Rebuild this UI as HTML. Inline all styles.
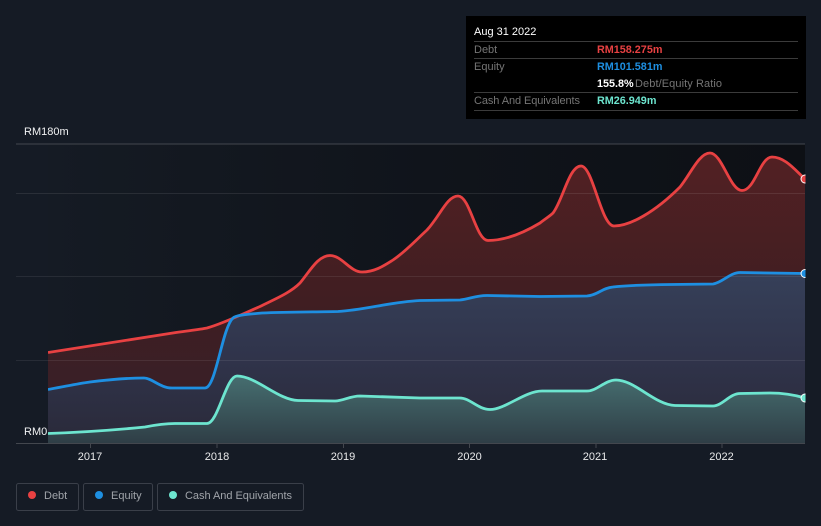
<!DOCTYPE html>
<html>
<head>
<meta charset="utf-8">
<style>
html,body{margin:0;padding:0;background:#151b25;}
svg{display:block;}
text{font-family:"Liberation Sans",sans-serif;font-size:11px;}
</style>
</head>
<body>
<svg width="821" height="526" viewBox="0 0 821 526" xmlns="http://www.w3.org/2000/svg">
<defs>
<linearGradient id="bg" x1="48" x2="805" y1="0" y2="0" gradientUnits="userSpaceOnUse">
<stop offset="0" stop-color="#151b24"/><stop offset="0.2" stop-color="#131820"/><stop offset="0.5" stop-color="#10141b"/><stop offset="1" stop-color="#0d1015"/>
</linearGradient>
<linearGradient id="d" x1="0" x2="0" y1="150" y2="440" gradientUnits="userSpaceOnUse">
<stop offset="0" stop-color="#532023"/><stop offset="0.55" stop-color="#3f1e22"/><stop offset="1" stop-color="#35202a"/>
</linearGradient>
<linearGradient id="e" x1="0" x2="0" y1="272" y2="440" gradientUnits="userSpaceOnUse">
<stop offset="0" stop-color="#364059"/><stop offset="0.5" stop-color="#30344b"/><stop offset="1" stop-color="#2a2a3a"/>
</linearGradient>
<linearGradient id="c" x1="0" x2="0" y1="376" y2="443" gradientUnits="userSpaceOnUse">
<stop offset="0" stop-color="#466e70"/><stop offset="1" stop-color="#2f3e46"/>
</linearGradient>
<clipPath id="clip"><rect x="48" y="140" width="757" height="303.5"/></clipPath>
</defs>
<rect width="821" height="526" fill="#151b25"/>
<rect x="48" y="144" width="757" height="299" fill="url(#bg)"/>

<g clip-path="url(#clip)">
<path fill="url(#d)" d="M48,352.5 L176,332.5 C190,330.5 200,329.5 207,328 C222,324 245,313 260,306.5 C275,299 290,293 300,283 C310,271 318,255.5 330,255.5 C342,255.5 350,272 362,272 C375,272 385,265 393,260 C405,252 415,241 427,230 C440,216 447,196 458,196 C470,196 476,240.5 488,240.5 C503,240.5 520,235 540,223 C545,219 550,216 553,213 C563,200 569,166 581,166 C593,166 601,226 614,226 C630,226 655,212 680,187 C690,175 699,153 710,153 C722,153 730,190.5 742,190.5 C755,190.5 760,157 772,157 C785,157 795,170 805,179 L805,443 L48,443 Z"/>
<path fill="url(#e)" d="M48,389.5 C62,387 76,384 90,382 C110,379.5 125,378 144,378 C152,378 160,388 172,388 L205,388 C216,388 222,328 233,318 C235,315.5 245,314.5 262,313 C285,312 310,312 338,311.5 C365,310 390,302 420,300.5 L460,300 C470,299 475,295.5 487,295.5 L540,296.5 L587,296 C598,295 602,288 613,287 C630,285 650,284.7 672,284.5 L713,284 C722,283 730,272.5 740,272.5 L805,273.5 L805,443 L48,443 Z"/>
<path fill="url(#c)" d="M48,433.5 C75,432.5 115,430 145,427 C155,425 165,423.5 175,423.5 L207,423.5 C218,423.5 226,376 237,376 C256,376 278,400 298,400.5 L335,401 C343,401 350,396 360,396 L420,398 L460,398 C470,398 478,409.5 490,409.5 C505,409.5 525,391 542,391 L587,391 C597,391 605,380 616,380 C635,380 655,405 675,405.5 L713,406 C722,406 730,393.5 740,393.5 L770,393 C785,393 795,395 805,398 L805,443 L48,443 Z"/>
</g>

<g stroke="#ffffff" stroke-width="1">
<path d="M16,193.5H805" stroke-opacity="0.09"/>
<path d="M16,276.5H805" stroke-opacity="0.08"/>
<path d="M16,360.5H805" stroke-opacity="0.08"/>
</g>
<path d="M16,144H805" stroke="#43474e" stroke-width="1"/>
<path d="M16,443.5H805" stroke="#43474e" stroke-width="1"/>
<path d="M90.5,444V448M217,444V448M343.5,444V448M469.5,444V448M596,444V448M722,444V448" stroke="#43474e" stroke-width="1"/>

<g clip-path="url(#clip)" fill="none" stroke-width="2.8" stroke-linejoin="round">
<path stroke="#e84142" d="M48,352.5 L176,332.5 C190,330.5 200,329.5 207,328 C222,324 245,313 260,306.5 C275,299 290,293 300,283 C310,271 318,255.5 330,255.5 C342,255.5 350,272 362,272 C375,272 385,265 393,260 C405,252 415,241 427,230 C440,216 447,196 458,196 C470,196 476,240.5 488,240.5 C503,240.5 520,235 540,223 C545,219 550,216 553,213 C563,200 569,166 581,166 C593,166 601,226 614,226 C630,226 655,212 680,187 C690,175 699,153 710,153 C722,153 730,190.5 742,190.5 C755,190.5 760,157 772,157 C785,157 795,170 805,179"/>
<path stroke="#1e8fe1" d="M48,389.5 C62,387 76,384 90,382 C110,379.5 125,378 144,378 C152,378 160,388 172,388 L205,388 C216,388 222,328 233,318 C235,315.5 245,314.5 262,313 C285,312 310,312 338,311.5 C365,310 390,302 420,300.5 L460,300 C470,299 475,295.5 487,295.5 L540,296.5 L587,296 C598,295 602,288 613,287 C630,285 650,284.7 672,284.5 L713,284 C722,283 730,272.5 740,272.5 L805,273.5"/>
<path stroke="#6de5cf" d="M48,433.5 C75,432.5 115,430 145,427 C155,425 165,423.5 175,423.5 L207,423.5 C218,423.5 226,376 237,376 C256,376 278,400 298,400.5 L335,401 C343,401 350,396 360,396 L420,398 L460,398 C470,398 478,409.5 490,409.5 C505,409.5 525,391 542,391 L587,391 C597,391 605,380 616,380 C635,380 655,405 675,405.5 L713,406 C722,406 730,393.5 740,393.5 L770,393 C785,393 795,395 805,398"/>
</g>
<clipPath id="clip2"><rect x="790" y="140" width="15.5" height="300"/></clipPath>
<g clip-path="url(#clip2)" stroke="#ffffff" stroke-width="1">
<circle cx="805" cy="179" r="4" fill="#e84142"/>
<circle cx="805" cy="273.5" r="4" fill="#1e8fe1"/>
<circle cx="805" cy="398" r="4" fill="#6de5cf"/>
</g>

<text x="24" y="135" fill="#f0f1f2">RM180m</text>
<text x="24" y="435" fill="#f0f1f2">RM0</text>
<g fill="#e8e9ea" text-anchor="middle">
<text x="90" y="460">2017</text>
<text x="217" y="460">2018</text>
<text x="343" y="460">2019</text>
<text x="469.5" y="460">2020</text>
<text x="595" y="460">2021</text>
<text x="721.5" y="460">2022</text>
</g>

<rect x="466" y="16" width="340" height="103" fill="#000"/>
<text x="474" y="35" fill="#fff">Aug 31 2022</text>
<path d="M474,41.5H798M474,58.5H798M474,92.5H798M474,110.5H798" stroke="#3b3b3b" stroke-width="1"/>
<text x="474" y="53" fill="#757575">Debt</text>
<text x="474" y="70" fill="#757575">Equity</text>
<text x="474" y="104" fill="#757575" textLength="106">Cash And Equivalents</text>
<g font-weight="bold">
<text x="597" y="53" fill="#e84142" style="font-size:10.8px">RM158.275m</text>
<text x="597" y="70" fill="#1e8fe1" style="font-size:10.8px">RM101.581m</text>
<text x="597" y="87" fill="#ffffff" style="font-size:10.8px">155.8%</text>
<text x="597" y="104" fill="#6de5cf" style="font-size:10.8px">RM26.949m</text>
</g>
<text x="635" y="87" fill="#757575" textLength="87">Debt/Equity Ratio</text>

<g fill="none" stroke="#3a3f49" stroke-width="1">
<rect x="16.5" y="483.5" width="62" height="27" rx="2"/>
<rect x="83.5" y="483.5" width="69" height="27" rx="2"/>
<rect x="157.5" y="483.5" width="146" height="27" rx="2"/>
</g>
<circle cx="32" cy="495" r="4" fill="#e84142"/>
<circle cx="99" cy="495" r="4" fill="#1e8fe1"/>
<circle cx="173" cy="495" r="4" fill="#6de5cf"/>
<g fill="#a0a4aa">
<text x="44" y="499">Debt</text>
<text x="111" y="499">Equity</text>
<text x="185" y="499" textLength="107">Cash And Equivalents</text>
</g>
</svg>
</body>
</html>
